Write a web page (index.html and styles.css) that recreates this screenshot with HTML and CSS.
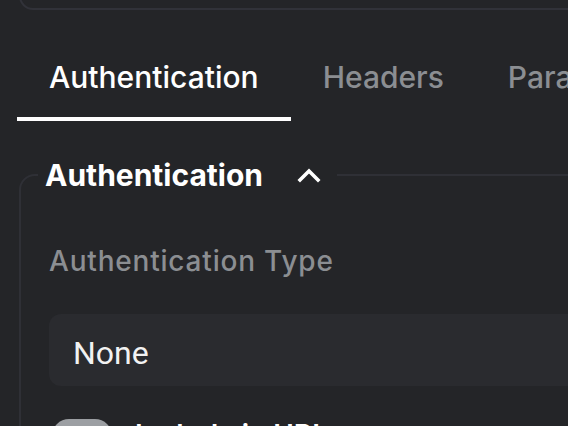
FILE: index.html
```html
<!DOCTYPE html>
<html>
<head>
<meta charset="utf-8">
<link rel="stylesheet" href="styles.css">
</head>
<body>
<div class="topcard"></div>
<nav class="tabs">
  <div class="tab active">Authentication</div>
  <div class="tab">Headers</div>
  <div class="tab">Parameters</div>
</nav>
<fieldset class="section">
  <legend class="legend">
    <span class="legend-text">Authentication</span>
    <svg class="chevron" width="24" height="16" viewBox="0 0 24 16"><polyline points="3,13 12,4 21,13" fill="none" stroke="#ffffff" stroke-width="3.6" stroke-linecap="square"/></svg>
  </legend>
  <div class="label">Authentication Type</div>
  <div class="select">None</div>
  <div class="toggle-row">
    <div class="toggle"></div>
    <div class="toggle-label">Include in URL</div>
  </div>
</fieldset>
</body>
</html>
```
FILE: styles.css
```css
html, body {
  margin: 0;
  padding: 0;
  background: #242528;
  overflow: hidden;
  width: 568px;
  height: 426px;
}
body {
  font-family: "Inter", "Noto Sans", sans-serif;
  color: #ffffff;
}
.topcard {
  height: 28px;
  margin-top: -22px;
  margin-left: 19px;
  width: 800px;
  border: 2px solid #313239;
  border-radius: 14px;
}
.tabs {
  display: flex;
  margin-left: 17px;
  margin-top: 47px;
  white-space: nowrap;
}
.tab {
  padding: 0 32px;
  font-size: 30px;
  font-weight: 500;
  line-height: 40px;
  height: 60px;
  color: #8b8e92;
  border-bottom: 4px solid transparent;
}
.tab.active {
  color: #ffffff;
  border-bottom-color: #ffffff;
}
.section {
  margin: 34px 0 0 19px;
  width: 800px;
  border: 2px solid #2f3036;
  border-radius: 16px;
  padding: 0 0 0 28px;
}
.legend {
  margin-left: -11px;
  padding: 0 16px 0 7px;
  display: flex;
  align-items: center;
  gap: 34px;
}
.legend-text {
  font-size: 30px;
  font-weight: 700;
  line-height: 40px;
}
.label {
  margin-top: 46px;
  font-size: 28px;
  font-weight: 500;
  letter-spacing: 0.8px;
  line-height: 40px;
  color: #8b8e92;
}
.select {
  margin-top: 33px;
  height: 72px;
  box-sizing: border-box;
  border-radius: 12px;
  background: #2a2b2f;
  padding-left: 24px;
  padding-top: 6px;
  display: flex;
  align-items: center;
  font-family: "Roboto", "Inter", sans-serif;
  font-size: 32px;
  color: #f2f2f2;
}
.toggle-row {
  display: flex;
  gap: 23px;
  margin-top: 33px;
  margin-left: 3px;
}
.toggle {
  width: 60px;
  height: 34px;
  border-radius: 17px;
  background: #9c9fa3;
}
.toggle-label {
  font-size: 28px;
  font-weight: 600;
  line-height: 34px;
  margin-top: -1px;
}
```
